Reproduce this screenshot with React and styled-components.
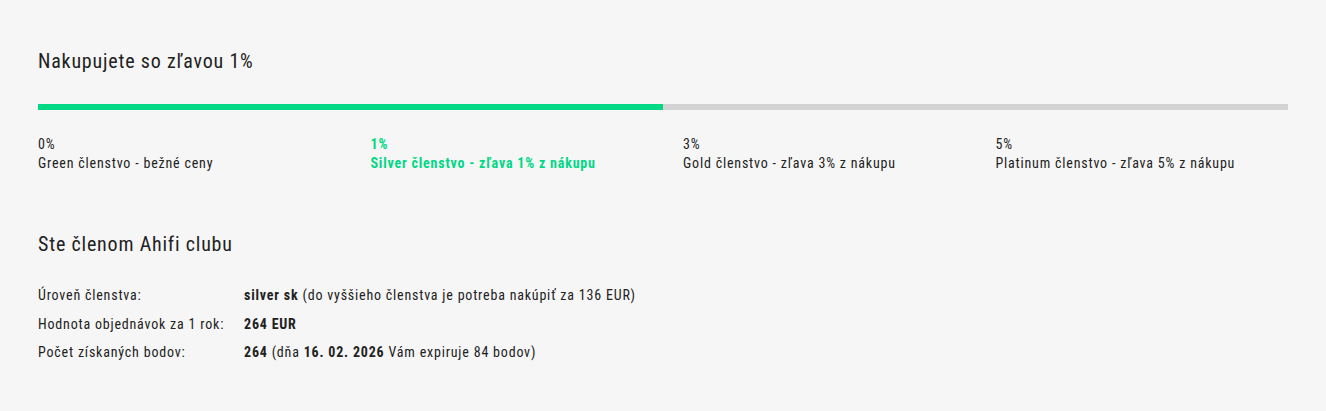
import React from "react";
import styled, { createGlobalStyle } from "styled-components";

const GlobalStyle = createGlobalStyle`
  html, body {
    margin: 0;
    padding: 0;
    background: #f6f6f6;
  }
  body {
    font-family: "Roboto Condensed", Roboto, "Liberation Sans", sans-serif;
    color: #222;
  }
`;

const Page = styled.div`
  padding: 48px 38px 40px;
`;

const Title = styled.h2`
  margin: 0;
  font-size: 20px;
  font-weight: 400;
  letter-spacing: 0.8px;
  line-height: 26px;
`;

const Track = styled.div`
  margin-top: 30px;
  height: 6px;
  background: #d3d3d3;
`;

const Fill = styled.div`
  height: 100%;
  background: #00d886;
`;

const Levels = styled.div`
  display: grid;
  grid-template-columns: repeat(4, 1fr);
  margin-top: 25px;
`;

const Level = styled.div`
  font-size: 14px;
  line-height: 19px;
  letter-spacing: 0.8px;
  padding-left: ${(props) => (props.first ? 0 : 20)}px;
  color: ${(props) => (props.active ? "#00d886" : "#222")};
  font-weight: ${(props) => (props.active ? 700 : 400)};
`;

const Club = styled.div`
  margin-top: 58px;
`;

const Rows = styled.div`
  display: grid;
  grid-template-columns: 206px 1fr;
  row-gap: 8.5px;
  margin-top: 28px;
  font-size: 14px;
  line-height: 20px;
  letter-spacing: 0.8px;
`;

const levels = [
  { pct: "0%", name: "Green členstvo - bežné ceny" },
  { pct: "1%", name: "Silver členstvo - zľava 1% z nákupu", active: true },
  { pct: "3%", name: "Gold členstvo - zľava 3% z nákupu" },
  { pct: "5%", name: "Platinum členstvo - zľava 5% z nákupu" },
];

const App = () => {
  return (
    <Page>
      <GlobalStyle />
      <Title>Nakupujete so zľavou 1%</Title>
      <Track>
        <Fill style={{ width: "50%" }} />
      </Track>
      <Levels>
        {levels.map((el, i) => (
          <Level key={el.pct} active={el.active} first={i === 0}>
            <div>{el.pct}</div>
            <div>{el.name}</div>
          </Level>
        ))}
      </Levels>
      <Club>
        <Title>Ste členom Ahifi clubu</Title>
        <Rows>
          <div>Úroveň členstva:</div>
          <div>
            <b>silver sk</b> (do vyššieho členstva je potreba nakúpiť za 136 EUR)
          </div>
          <div>Hodnota objednávok za 1 rok:</div>
          <div>
            <b>264 EUR</b>
          </div>
          <div>Počet získaných bodov:</div>
          <div>
            <b>264</b> (dňa <b>16. 02. 2026</b> Vám expiruje 84 bodov)
          </div>
        </Rows>
      </Club>
    </Page>
  );
};

export default App;
